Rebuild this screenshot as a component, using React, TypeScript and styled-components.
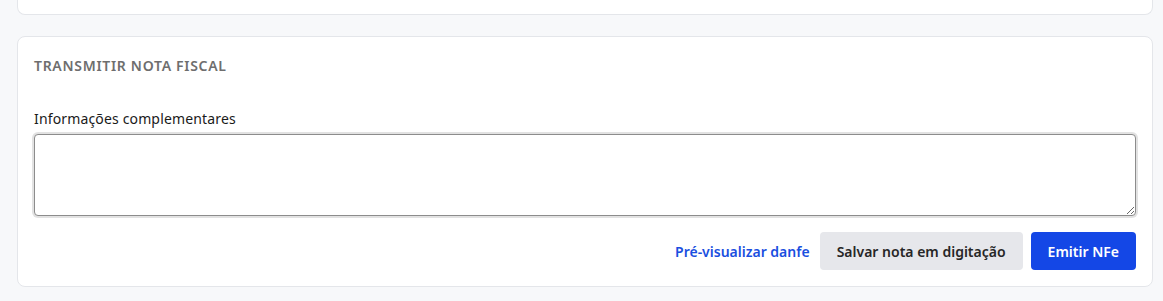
import React from "react";
import styled, { createGlobalStyle } from "styled-components";

const GlobalStyle = createGlobalStyle`
  * {
    box-sizing: border-box;
  }
  body {
    margin: 0;
    background: #f7f8fa;
    font-family: "Noto Sans", "Open Sans", sans-serif;
  }
`;

const Page = styled.div`
  display: flex;
  flex-direction: column;
  gap: 21px;
  padding: 0 10px 0 17px;
`;

const TopCard = styled.div`
  height: 15px;
  background: #ffffff;
  border: 1px solid #e4e6ea;
  border-top: none;
  border-radius: 0 0 8px 8px;
`;

const Card = styled.section`
  background: #ffffff;
  border: 1px solid #e4e6ea;
  border-radius: 8px;
  padding: 19px 16px 16px;
  display: flex;
  flex-direction: column;
`;

const Title = styled.h2`
  margin: 0 0 33px;
  font-size: 14px;
  line-height: 20px;
  font-weight: 600;
  letter-spacing: 0.7px;
  text-transform: uppercase;
  color: #6e6e6e;
`;

const Label = styled.label`
  font-size: 14px;
  line-height: 20px;
  letter-spacing: 0.15px;
  color: #1a1a1a;
  margin-bottom: 5px;
`;

const TextArea = styled.textarea`
  display: block;
  width: 100%;
  height: 82px;
  margin: 0;
  padding: 10px 12px;
  font-family: "Noto Sans", sans-serif;
  font-size: 14px;
  line-height: 20px;
  color: #1a1a1a;
  caret-color: #000000;
  border: 1px solid #8c8c8c;
  border-radius: 4px;
  outline: none;
  box-shadow: 0 0 0 2px #e2e2e2;
`;

const Actions = styled.div`
  display: flex;
  justify-content: flex-end;
  align-items: center;
  margin-top: 16px;
  gap: 8px;
`;

const LinkButton = styled.button`
  background: none;
  border: none;
  padding: 0;
  margin-right: 2px;
  font-family: "Noto Sans", sans-serif;
  font-size: 14px;
  font-weight: 600;
  color: #1a4fe0;
  cursor: pointer;
`;

const Button = styled.button<{ $primary?: boolean }>`
  height: 38px;
  padding: 0 17px;
  border: none;
  border-radius: 4px;
  font-family: "Noto Sans", sans-serif;
  font-size: 14px;
  font-weight: 600;
  cursor: pointer;
  background: ${(p) => (p.$primary ? "#1447e6" : "#e6e7eb")};
  color: ${(p) => (p.$primary ? "#ffffff" : "#262626")};
`;

export default function App() {
  return (
    <>
      <GlobalStyle />
      <Page>
        <TopCard />
        <Card>
          <Title>Transmitir nota fiscal</Title>
          <Label htmlFor="info">Informações complementares</Label>
          <TextArea id="info" autoFocus />
          <Actions>
            <LinkButton>Pré-visualizar danfe</LinkButton>
            <Button>Salvar nota em digitação</Button>
            <Button $primary>Emitir NFe</Button>
          </Actions>
        </Card>
      </Page>
    </>
  );
}
